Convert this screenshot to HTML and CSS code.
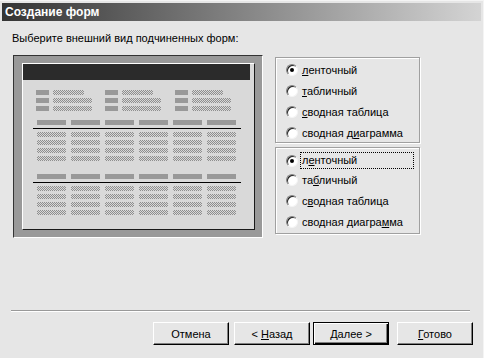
FILE: index.html
```html
<!DOCTYPE html>
<html lang="ru">
<head>
    <meta charset="UTF-8">
    <title>Создание форм</title>
    <link rel="stylesheet" href="styles.css">
</head>
<body>
    <div class="window">
        <div class="titlebar">Создание форм</div>

        <div class="content">
            <div class="prompt">Выберите внешний вид подчиненных форм:</div>

            <div class="main">
                <div class="preview">
                    <div class="sheet">
                        <div class="sheet-head"></div>

                        <div class="fields">
                            <div class="field"><span class="lbl"></span><span class="val short"></span></div>
                            <div class="field"><span class="lbl"></span><span class="val"></span></div>
                            <div class="field"><span class="lbl"></span><span class="val"></span></div>
                            <div class="field"><span class="lbl"></span><span class="val short"></span></div>
                            <div class="field"><span class="lbl"></span><span class="val"></span></div>
                            <div class="field"><span class="lbl"></span><span class="val"></span></div>
                            <div class="field"><span class="lbl"></span><span class="val short"></span></div>
                            <div class="field"><span class="lbl"></span><span class="val"></span></div>
                            <div class="field"><span class="lbl"></span><span class="val"></span></div>
                        </div>

                        <div class="table">
                            <div class="cols head"><span></span><span></span><span></span><span></span><span></span><span></span></div>
                            <div class="rule"></div>
                            <div class="cols"><span></span><span></span><span></span><span></span><span></span><span></span></div>
                            <div class="cols"><span></span><span></span><span></span><span></span><span></span><span></span></div>
                            <div class="cols"><span></span><span></span><span></span><span></span><span></span><span></span></div>
                            <div class="cols"><span></span><span></span><span></span><span></span><span></span><span></span></div>
                        </div>

                        <div class="table second">
                            <div class="cols head"><span></span><span></span><span></span><span></span><span></span><span></span></div>
                            <div class="rule"></div>
                            <div class="cols"><span></span><span></span><span></span><span></span><span></span><span></span></div>
                            <div class="cols"><span></span><span></span><span></span><span></span><span></span><span></span></div>
                            <div class="cols"><span></span><span></span><span></span><span></span><span></span><span></span></div>
                            <div class="cols"><span></span><span></span><span></span><span></span><span></span><span></span></div>
                        </div>
                    </div>
                </div>

                <div class="options">
                    <div class="group first">
                        <label class="radio"><span class="dot checked"></span><span><u>л</u>енточный</span></label>
                        <label class="radio"><span class="dot"></span><span><u>т</u>абличный</span></label>
                        <label class="radio"><span class="dot"></span><span><u>с</u>водная таблица</span></label>
                        <label class="radio"><span class="dot"></span><span>сводная д<u>и</u>аграмма</span></label>
                    </div>
                    <div class="group second">
                        <label class="radio"><span class="dot checked"></span><span class="focus">л<u>е</u>нточный</span></label>
                        <label class="radio"><span class="dot"></span><span>та<u>б</u>личный</span></label>
                        <label class="radio"><span class="dot"></span><span>с<u>в</u>одная таблица</span></label>
                        <label class="radio"><span class="dot"></span><span>сводная диагра<u>м</u>ма</span></label>
                    </div>
                </div>
            </div>
        </div>

        <div class="footer">
            <div class="separator"></div>
            <div class="buttons">
                <button class="cancel">Отмена</button>
                <button class="back">&lt; <u>Н</u>азад</button>
                <button class="next default"><u>Д</u>алее &gt;</button>
                <button><u>Г</u>отово</button>
            </div>
        </div>
    </div>
</body>
</html>
```

FILE: styles.css
```css
body {
    margin: 0;
    background-color: #e6e6e6;
    font-family: 'Liberation Sans', Arial, sans-serif;
    font-size: 11px;
    color: #000;
}

.window {
    height: 358px;
    box-sizing: border-box;
    padding: 2px 2px 0 2px;
    display: flex;
    flex-direction: column;
    border-top: 1px solid #f4f4f4;
    border-right: 1px solid #f4f4f4;
}

.titlebar {
    height: 18px;
    line-height: 18px;
    padding-left: 3px;
    background: linear-gradient(to right, #343434, #d4d4d4);
    color: #fff;
    font-size: 12px;
    font-weight: bold;
}

.content {
    padding: 0 10px;
}

.prompt {
    margin-top: 11px;
    line-height: 13px;
}

.main {
    display: flex;
    margin-top: 10px;
}

/* preview picture */
.preview {
    margin-left: 1px;
    width: 250px;
    height: 183px;
    box-sizing: border-box;
    padding: 7px 7px 7px 8px;
    background-color: #999;
    border: 1px solid;
    border-color: #333 #fff #fff #333;
    display: flex;
}

.sheet {
    flex: 1;
    background-color: #d9d9d9;
    border: 1px solid;
    border-color: #fff #1a1a1a #1a1a1a #fff;
}

.sheet-head {
    height: 16px;
    margin-right: 4px;
    background-color: #2b2b2b;
}

.fields {
    display: grid;
    grid-template-columns: 69px 70px 70px;
    grid-auto-flow: column;
    grid-template-rows: repeat(3, 5px);
    row-gap: 3px;
    margin-top: 10px;
    padding-left: 13px;
}

.field {
    display: flex;
    gap: 4px;
    height: 5px;
}

.lbl {
    width: 13px;
    background-color: #999;
}

.val {
    width: 39px;
    background: repeating-conic-gradient(#8e8e8e 0% 25%, #d9d9d9 0% 50%) 0 0 / 2px 2px;
}

.val.short {
    width: 31px;
}

.table {
    margin-top: 9px;
}

.table.second {
    margin-top: 13px;
}

.cols {
    display: flex;
    gap: 5px;
    height: 5px;
    margin: 3px 0 0 14px;
}

.cols span {
    width: 29px;
    background: repeating-conic-gradient(#8e8e8e 0% 25%, #d9d9d9 0% 50%) 0 0 / 2px 2px;
}

.cols.head {
    margin-top: 0;
}

.cols.head span {
    background: #999;
}

.rule {
    height: 1px;
    width: 208px;
    margin: 3px 0 1px 10px;
    background-color: #000;
}

/* option groups */
.options {
    margin-left: 12px;
    margin-top: 2px;
    display: flex;
    flex-direction: column;
    gap: 4px;
}

.group {
    width: 145px;
    box-sizing: border-box;
    border: 1px solid #a0a0a0;
    box-shadow: inset 1px 1px #fff, 1px 1px #fff;
    padding-left: 10px;
}

.group.first {
    height: 86px;
    padding-top: 1px;
}

.group.second {
    height: 87px;
    padding-top: 4px;
}

.radio {
    display: flex;
    align-items: center;
    gap: 4px;
    height: 21px;
}

.group.second .radio:first-child {
    height: 17px;
}

.dot {
    width: 12px;
    height: 12px;
    box-sizing: border-box;
    border-radius: 50%;
    background-color: #fff;
    border: 1px solid;
    border-color: #808080 #f4f4f4 #f4f4f4 #808080;
    box-shadow: inset 1px 1px #222;
    display: flex;
    align-items: center;
    justify-content: center;
}

.dot.checked::after {
    content: "";
    width: 4px;
    height: 4px;
    border-radius: 50%;
    background-color: #000;
}

.focus {
    width: 111px;
    height: 15px;
    line-height: 15px;
    margin-left: -1px;
    padding-left: 1px;
    outline: 1px dotted #000;
}

/* footer */
.footer {
    margin-top: auto;
    padding-bottom: 13px;
}

.separator {
    margin: 0 11px 0 9px;
    border-top: 1px solid #999;
    border-bottom: 1px solid #fff;
}

.buttons {
    display: flex;
    justify-content: flex-end;
    padding-right: 8px;
    margin-top: 10px;
}

button {
    width: 76px;
    height: 23px;
    padding: 0;
    font-family: inherit;
    font-size: 11px;
    color: #000;
    background-color: #e6e6e6;
    border: 1px solid;
    border-color: #fff #000 #000 #fff;
    box-shadow: inset -1px -1px #808080;
}

.cancel {
    margin-right: 5px;
}

.back {
    margin-right: 3px;
}

.next {
    margin-right: 8px;
}

button.default {
    border-color: #000;
    box-shadow: inset 1px 1px #fff, inset -1px -1px #000, inset -2px -2px #808080;
}
```
